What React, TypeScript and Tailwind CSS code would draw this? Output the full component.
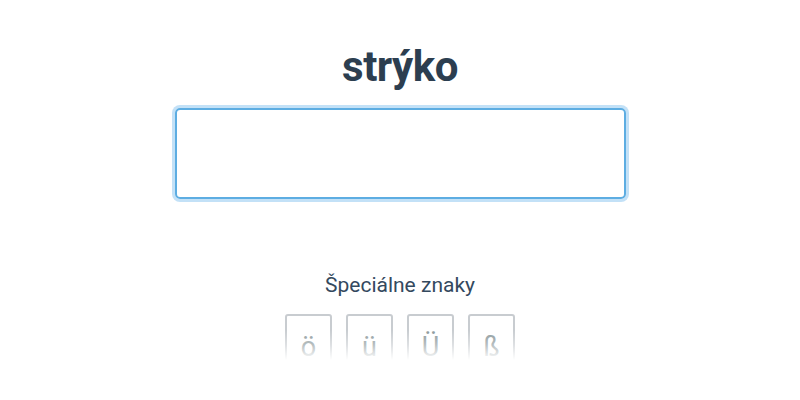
import { useState } from 'react';

const SPECIAL_CHARS = ['ö', 'ü', 'Ü', 'ß'];

export default function App() {
  const [value, setValue] = useState('');

  return (
    <div
      className="flex h-[400px] w-full flex-col items-center bg-white text-[#34495e]"
      style={{ fontFamily: 'Roboto, "Noto Sans", sans-serif' }}
    >
      <h1 className="mt-[41px] text-[42px] font-bold leading-[52px] tracking-[-0.5px] text-[#2c3e50]">
        strýko
      </h1>

      <input
        value={value}
        onChange={(e) => setValue(e.target.value)}
        className="mt-[15px] h-[91px] w-[451px] rounded-[5px] border-2 border-[#5dade2] px-4 text-3xl outline-none ring-[3px] ring-[#c3e1f7]"
      />

      <p className="mt-[73px] text-[21px] leading-[26px] text-[#34495e]">Špeciálne znaky</p>

      {/* special character buttons, faded out at the bottom */}
      <div className="relative mt-[16px] h-[46px] overflow-hidden">
        <div className="flex gap-[14px]">
          {SPECIAL_CHARS.map((c) => (
            <button
              key={c}
              onClick={() => setValue((v) => v + c)}
              className="h-[60px] w-[47px] rounded-[3px] border-2 border-[#c8ccd0] bg-white pt-[6px] text-[27px] leading-[40px] text-[#8a979a]"
            >
              {c}
            </button>
          ))}
        </div>
        <div className="pointer-events-none absolute inset-x-0 bottom-0 h-[30px] bg-gradient-to-b from-white/0 via-white/40 to-white" />
      </div>
    </div>
  );
}
